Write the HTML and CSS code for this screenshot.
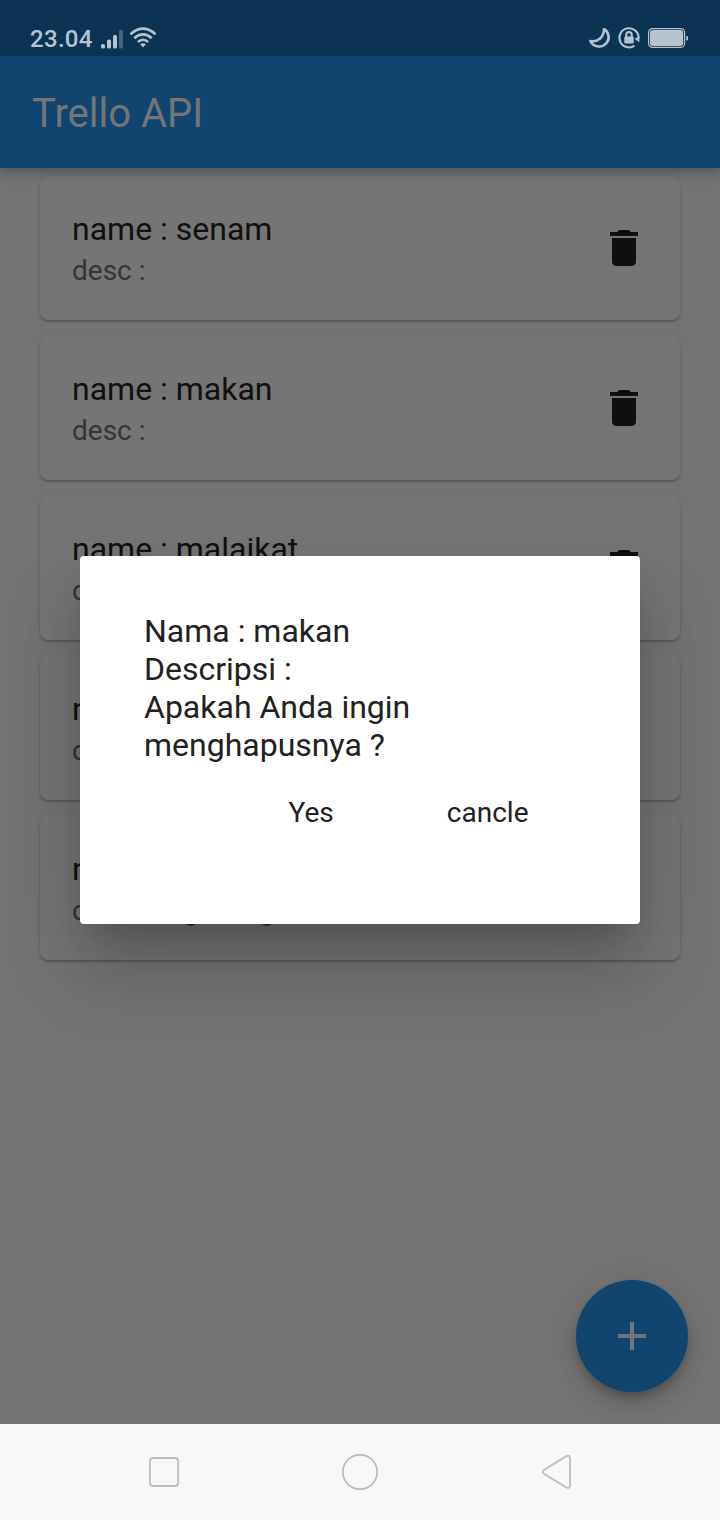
FILE: index.html
```html
<!DOCTYPE html>
<html lang="id">
<head>
<meta charset="utf-8">
<title>Trello API</title>
<link rel="stylesheet" href="styles.css">
</head>
<body>
<svg class="defs" width="0" height="0">
  <symbol id="trash" viewBox="0 0 24 24"><path d="M6 19c0 1.1.9 2 2 2h8c1.1 0 2-.9 2-2V7H6v12zM19 4h-3.5l-1-1h-5l-1 1H5v2h14V4z"/></symbol>
</svg>
<div class="screen">
  <header class="status">
    <span class="clock">23.04</span>
    <svg class="signal" width="23" height="19" viewBox="0 0 23 19">
      <rect x="0" y="14" width="4" height="4.500" rx="1.600"/>
      <rect x="6" y="9.500" width="4" height="9" rx="1.600"/>
      <rect x="12" y="5" width="4" height="13.500" rx="1.600"/>
      <rect class="weak" x="18" y="0" width="4" height="18.500" rx="1.600"/>
    </svg>
    <svg class="wifi" width="28" height="22" viewBox="0 0 28 22">
      <g class="stroke">
        <path d="M1.500 7.200Q14-3.800 26.500 7.200"/>
        <path d="M5.300 11.200Q14 3.600 22.700 11.200"/>
        <path d="M8.900 14.900Q14 10.600 19.100 14.900"/>
      </g>
      <path d="M11.200 17.200Q14 15.200 16.800 17.200L14 20.500z"/>
    </svg>
    <span class="grow"></span>
    <svg class="moon" width="24" height="24" viewBox="0 0 24 24">
      <path class="stroke" d="M16 3.200C21 6 22.200 12.400 18.500 17C14 22.400 5.500 21.500 2.300 15C9.500 16.500 15.800 11.500 16 3.200z"/>
    </svg>
    <svg class="lock" width="24" height="24" viewBox="0 0 24 24">
      <path class="stroke thin" d="M17.500 19.700A9.600 9.600 0 1 1 21.600 12.500"/>
      <path d="M17.500 12.800L22.300 10.500V16.300z"/>
      <rect x="7.300" y="10.500" width="9.400" height="7" rx="1.200"/>
      <path class="stroke thin" d="M9.300 11V8.700a2.700 2.700 0 0 1 5.400 0V11"/>
    </svg>
    <svg class="battery" width="41" height="20" viewBox="0 0 41 20">
      <rect class="outline" x=".6" y=".6" width="36" height="18.800" rx="4"/>
      <rect x="2" y="2" width="33.200" height="16" rx="3"/>
      <rect x="38.200" y="8" width="1.800" height="4.500" rx=".8"/>
    </svg>
  </header>
  <div class="appbar"><h1>Trello API</h1></div>
  <main class="list">
    <article class="card"><div><p class="name">name : senam</p><p class="desc">desc :</p></div><svg class="trash"><use href="#trash"/></svg></article>
    <article class="card"><div><p class="name">name : makan</p><p class="desc">desc :</p></div><svg class="trash"><use href="#trash"/></svg></article>
    <article class="card"><div><p class="name">name : malaikat</p><p class="desc">desc :</p></div><svg class="trash"><use href="#trash"/></svg></article>
    <article class="card"><div><p class="name">name :</p><p class="desc">desc :</p></div><svg class="trash"><use href="#trash"/></svg></article>
    <article class="card"><div><p class="name">name :</p><p class="desc">desc : bagi uang</p></div><svg class="trash"><use href="#trash"/></svg></article>
  </main>
  <nav class="navbar">
    <svg width="196" height="96" viewBox="0 0 196 96"><rect x="83.900" y="34" width="28.300" height="28" rx="3"/></svg>
    <svg width="196" height="96" viewBox="0 0 196 96"><circle cx="98" cy="48" r="17.200"/></svg>
    <svg width="196" height="96" viewBox="0 0 196 96"><path d="M86.700 45.500L107.900 32.400Q112 30.500 112 34.200V61.200Q112 65 107.900 63.200L86.700 50.200Q83.200 47.900 86.700 45.500z"/></svg>
  </nav>
</div>
<button class="fab" aria-label="add"><svg width="28" height="28" viewBox="0 0 28 28"><path d="M12 0h4v12h12v4H16v12h-4V16H0v-4h12z"/></svg></button>
<section class="dialog" role="dialog">
  <p class="message">Nama : makan<br>Descripsi :<br>Apakah Anda ingin menghapusnya ?</p>
  <div class="actions"><span>Yes</span><span>cancle</span></div>
</section>
</body>
</html>
```
FILE: styles.css
```css
* { box-sizing: border-box; }
body { margin: 0; font-family: Roboto, sans-serif; background: #737373; }
h1, p { margin: 0; font-weight: 400; }
svg { flex: none; }
.defs { position: absolute; }

.screen { width: 720px; height: 1520px; display: flex; flex-direction: column; overflow: hidden; }

.status { height: 56px; flex: none; background: #0b3352; display: flex; align-items: flex-start; padding: 0 32px 0 30px; color: #b7c4ce; fill: #b7c4ce; z-index: 2; }
.clock { font-size: 24px; line-height: 28px; font-weight: 500; letter-spacing: .3px; width: 71px; margin-top: 25px; }
.stroke { fill: none; stroke: #b7c4ce; stroke-width: 2.6; stroke-linejoin: round; }
.thin { stroke-width: 2.1; }
.signal { margin-top: 29.500px; }
.weak { fill: #47667e; }
.wifi { margin: 27px 0 0 4.500px; }
.grow { flex: 1; }
.moon { margin-top: 26px; margin-right: 5px; }
.lock { margin-top: 26px; margin-right: 7px; }
.battery { margin: 28px -1px 0 0; }
.outline { fill: none; stroke: #b7c4ce; stroke-width: 1.2; }

.appbar { height: 112px; flex: none; background: #0f4570; display: flex; align-items: center; padding: 4px 0 0 32px; box-shadow: 0 4px 8px -2px rgba(0,0,0,.16), 0 8px 10px rgba(0,0,0,.08), 0 2px 14px rgba(0,0,0,.07); z-index: 1; }
.appbar h1 { font-size: 40px; line-height: 48px; color: #757575; }

.list { flex: 1; display: flex; flex-direction: column; gap: 16px; padding: 8px 40px 0; }
.card { height: 144px; flex: none; display: flex; align-items: center; justify-content: space-between; padding: 0 32px; border-radius: 8px; background: #757575; box-shadow: 0 2px 2px rgba(0,0,0,.13), 0 1px 1px rgba(0,0,0,.1), 0 1px 4px rgba(0,0,0,.09); }
.name { font-size: 32px; line-height: 38px; color: #101010; padding-top: 2px; }
.desc { font-size: 28px; line-height: 34px; color: #353535; margin-top: 6px; }
.trash { width: 48px; height: 48px; fill: #0f0f0f; }

.navbar { height: 96px; flex: none; display: flex; justify-content: center; background: #f8f8f8; fill: none; stroke: #bdbdbd; stroke-width: 1.800; z-index: 1; }

.fab { position: absolute; left: 576px; top: 1280px; width: 112px; height: 112px; padding: 0; border: 0; border-radius: 50%; background: #0f4570; fill: #757575; display: flex; align-items: center; justify-content: center; box-shadow: 0 6px 10px -2px rgba(0,0,0,.2), 0 12px 20px rgba(0,0,0,.14), 0 2px 30px rgba(0,0,0,.06); clip-path: inset(-40px -40px -32px -40px); }

.dialog { position: absolute; left: 80px; top: 556px; width: 560px; height: 368px; padding: 56px 64px 0; border-radius: 4px; background: #fff; color: #212121; box-shadow: 0 22px 30px -14px rgba(0,0,0,.14), 0 44px 72px 2px rgba(0,0,0,.18), 0 18px 70px 4px rgba(0,0,0,.05); }
.message { font-size: 32px; line-height: 38px; }
.actions { display: flex; justify-content: flex-end; gap: 113px; padding: 32px 47.500px 0 0; font-size: 28px; line-height: 34px; }
```
